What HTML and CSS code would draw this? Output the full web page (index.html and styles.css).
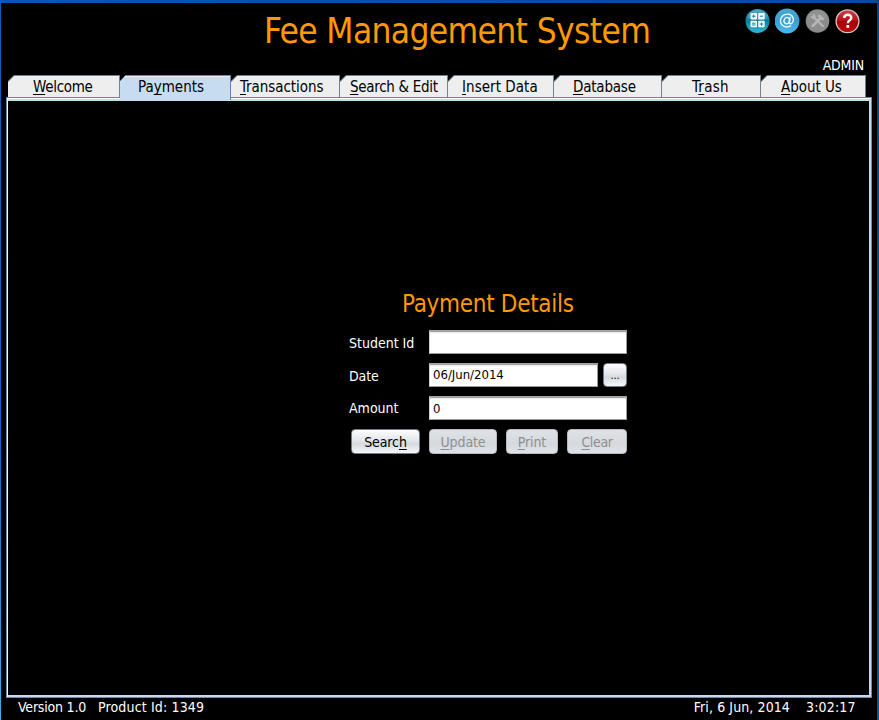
FILE: index.html
```html
<!DOCTYPE html>
<html lang="en">
<head>
<meta charset="utf-8">
<title>Fee Management System</title>
<link rel="stylesheet" href="styles.css">
</head>
<body>
<div class="window">
  <header class="header">
    <h1 class="title">Fee Management System</h1>
    <div class="tools">
      <div class="icons">
        <svg class="icon" viewBox="0 0 26 26" aria-label="Calculator">
          <defs><linearGradient id="teal" x1="0" y1="0" x2="0" y2="1"><stop offset="0" stop-color="#2a9cba"/><stop offset=".5" stop-color="#0c7d9d"/><stop offset="1" stop-color="#35b9d5"/></linearGradient></defs>
          <circle cx="12.500" cy="13" r="12" fill="url(#teal)"/>
          <path d="M2 10a11.3 11.3 0 0 1 22 0Q13 14 2 10Z" fill="#fff" opacity=".15"/>
          <g fill="#f4fbfd"><rect x="5.500" y="5" width="6.500" height="6.500" rx=".8"/><rect x="13.200" y="5" width="6.500" height="6.500" rx=".8"/><rect x="5.500" y="12.800" width="6.500" height="6.500" rx=".8"/><rect x="13.200" y="12.800" width="6.500" height="6.500" rx=".8"/></g>
          <path d="M7 8.200h3.500M8.700 6.500V10M14.700 8.200h3.500M7 15.200h3.500M7 17h3.500M14.700 16h3.500M16.500 14.300v3.500" stroke="#128aab" stroke-width="1"/>
        </svg>
        <svg class="icon" viewBox="0 0 26 26" aria-label="Mail">
          <defs><linearGradient id="sky" x1="0" y1="0" x2="0" y2="1"><stop offset="0" stop-color="#4aa6d0"/><stop offset=".5" stop-color="#3b9fd0"/><stop offset="1" stop-color="#4dbbe9"/></linearGradient></defs>
          <circle cx="12" cy="13" r="12.400" fill="url(#sky)"/>
          <g transform="translate(-.8 .2)" fill="none" stroke="#e9f6fc" stroke-width="1.400" stroke-linecap="round"><ellipse cx="12.600" cy="12.400" rx="2.700" ry="3.200" transform="rotate(18 12.600 12.400)"/><path d="M16 9.200l-.9 4.400c-.5 2.600 2.100 2.500 3.300.6 1.800-3.200.3-8-4.700-8.300C8.800 5.700 6 9.300 6.300 13c.4 5.300 6 7 10.200 4.700"/></g>
        </svg>
        <svg class="icon" viewBox="0 0 26 26" aria-label="Settings">
          <circle cx="12.500" cy="13" r="11.800" fill="#8c8c8c"/>
          <path d="M2 10a11.300 11.300 0 0 1 21 0Q12 14 2 10Z" fill="#fff" opacity=".06"/>
          <g stroke="#b6b6b6" fill="none"><path d="M9 9.500l8.800 8.500" stroke-width="2.200" stroke-linecap="round"/><path d="M6 8.500l2.200 1.300 1.500-1.500L8.400 6.300" stroke-width="1.800"/><path d="M15.800 10L7.700 18" stroke-width="2.500" stroke-linecap="round"/><path d="M13.500 7.300l5 4.500" stroke-width="2.800"/></g>
        </svg>
        <svg class="icon" viewBox="0 0 26 26" aria-label="Help">
          <defs><linearGradient id="red" x1="0" y1="0" x2="0" y2="1"><stop offset="0" stop-color="#cc4146"/><stop offset=".5" stop-color="#b90d12"/><stop offset=".51" stop-color="#a00005"/><stop offset="1" stop-color="#c50a10"/></linearGradient></defs>
          <circle cx="12.500" cy="13.300" r="11.400" fill="url(#red)" stroke="#d8c6c6" stroke-width="1.300"/>
          <path d="M9.200 10C9.300 5.700 16.300 5.700 16.300 9.700c0 2.500-3.500 2.800-3.500 5.500" fill="none" stroke="#fff" stroke-width="2.400"/><rect x="11.400" y="17" width="2.800" height="2.800" fill="#fff"/>
        </svg>
      </div>
      <div class="user">ADMIN</div>
    </div>
  </header>
  <nav class="tabs">
    <a class="tab welcome"><u>W</u>elcome</a>
    <a class="tab payments selected">Pa<u>y</u>ments</a>
    <a class="tab transactions"><u>T</u>ransactions</a>
    <a class="tab search-edit"><u>S</u>earch &amp; Edit</a>
    <a class="tab insert"><u>I</u>nsert Data</a>
    <a class="tab database"><u>D</u>atabase</a>
    <a class="tab trash">T<u>r</u>ash</a>
    <a class="tab about"><u>A</u>bout Us</a>
  </nav>
  <main class="panel">
    <form class="form">
      <h2 class="form-title">Payment Details</h2>
      <div class="row"><label class="id-label">Student Id</label><div class="field"></div></div>
      <div class="row"><label class="date-label">Date</label><div class="field date">06/Jun/2014</div><button type="button" class="btn browse">...</button></div>
      <div class="row"><label>Amount</label><div class="field amount">0</div></div>
      <div class="actions">
        <button type="button" class="btn search">Searc<u>h</u></button>
        <button type="button" class="btn update" disabled><u>U</u>pdate</button>
        <button type="button" class="btn print" disabled><u>P</u>rint</button>
        <button type="button" class="btn clear" disabled><u>C</u>lear</button>
      </div>
    </form>
  </main>
  <footer class="status">
    <span class="version">Version 1.0</span><span class="product">Product Id: 1349</span>
    <span class="day">Fri, 6 Jun, 2014</span><span class="time">3:02:17</span>
  </footer>
</div>
</body>
</html>
```
FILE: styles.css
```css
* { box-sizing: border-box; }
body {
  margin: 0;
  background: #000;
  color: #fff;
  font-family: "DejaVu Sans Condensed", "DejaVu Sans", sans-serif;
  font-size: 14px;
}
h1, h2 { margin: 0; font-weight: 400; color: #ff9900; }
u { text-decoration-thickness: 1px; text-underline-offset: 2px; text-decoration-skip-ink: none; }
.window {
  height: 720px;
  padding: 3px 2px 0 1px;
  overflow: hidden;
  background:
    linear-gradient(#0b5cb5, #0b62c4 60%, #35b5e8) left / 1px 100% no-repeat,
    linear-gradient(#03418a, #0654a8) right / 2px 100% no-repeat,
    linear-gradient(90deg, #0857b3, #074b9d) top / 100% 3px no-repeat,
    #000;
}
.header { display: flex; justify-content: space-between; height: 72px; padding: 0 13px 0 263px; }
.title { font-size: 35px; line-height: 56px; letter-spacing: -.65px; white-space: nowrap; }
.tools { display: flex; flex-direction: column; align-items: flex-end; padding-top: 5px; }
.icons { display: flex; gap: 4px; margin-right: 3px; }
.icon { width: 26px; height: 26px; display: block; }
.user { margin-top: 23px; font-size: 14px; line-height: 16px; letter-spacing: -.2px; }

.tabs {
  display: grid;
  grid-template-columns: 112px 111px 109px 108px 106px 108px 99px 105px;
  align-items: start;
  height: 22px;
  margin-left: 7px;
}
.tab {
  height: 22px;
  border-top: 1px solid #73808d;
  border-right: 1px solid #73808d;
  background: linear-gradient(135deg, #9aa3ac 4.5px, #eee 4.5px);
  clip-path: polygon(6px 0, 100% 0, 100% 100%, 0 100%, 0 6px);
  color: #000;
  font-size: 15px;
  line-height: 22px;
  white-space: nowrap;
}
.selected {
  height: 25px;
  position: relative;
  z-index: 1;
  background: #c8dcf1;
  border-color: #6382bf;
  box-shadow: inset 0 1px #e9f2fb;
}
.welcome { padding-left: 25px; letter-spacing: -.3px; }
.payments { padding-left: 18px; letter-spacing: 0; }
.transactions { padding-left: 9px; letter-spacing: -.05px; }
.search-edit { padding-left: 10px; letter-spacing: -.3px; }
.insert { padding-left: 14px; letter-spacing: .05px; }
.database { padding-left: 19px; letter-spacing: -.2px; }
.trash { padding-left: 30px; letter-spacing: .3px; }
.about { padding-left: 20px; letter-spacing: -.05px; }

.panel {
  width: 866px;
  height: 601px;
  margin-left: 5px;
  border: 1px solid #6f88a8;
  border-top-color: #6382bf;
  border-left-color: #6382bf;
  padding: 190px 0 0 342px;
  background: #000;
  box-shadow: inset 1px 1px #fff, inset 0 3px #c8dcf1, inset -2px -2px #c8d6ee;
}
.form-title { padding-left: 53px; font-size: 24px; line-height: 32px; letter-spacing: -.3px; white-space: nowrap; }
.form { width: 278px; }
.row { display: flex; align-items: center; height: 24px; margin-bottom: 9px; }
.form-title + .row { margin-top: 10px; }
.row label { width: 80px; }
.row .id-label { padding-top: 2px; }
.row .date-label { padding-top: 2px; letter-spacing: -.1px; }
.field {
  flex: 1;
  height: 24px;
  padding-left: 3px;
  border: 1px solid #9a9da0;
  border-top: 2px solid #a2a2a2;
  border-left-color: #ccc;
  background: linear-gradient(#e4e4e4, #fff 2px);
  color: #000;
  font-size: 13px;
  line-height: 20px;
}
.amount { line-height: 21px; }
.btn {
  height: 25px;
  padding: 0;
  border: 1px solid #777b82;
  border-radius: 4px;
  background: linear-gradient(#fdfdfe, #e6e9ed 40%, #d6dae0 60%, #f4f7fb);
  color: #000;
  font: inherit;
  letter-spacing: -.1px;
}
.btn:disabled { background: linear-gradient(#dfe2e6, #d5d9de 60%, #dfe3e8); border-color: #b5b8bd; color: #8e8f91; }
.browse { width: 24px; height: 24px; margin-left: 5px; font-size: 11px; line-height: 24px; }
.actions { display: flex; padding-left: 2px; }
.search { width: 69px; }
.update { width: 68px; margin-left: 9px; }
.print { width: 52px; margin-left: 9px; }
.clear { width: 60px; margin-left: 9px; letter-spacing: -.35px; }

.status { display: flex; height: 22px; padding: 0 21px 0 17px; line-height: 19px; white-space: nowrap; }
.version { width: 80px; letter-spacing: -.2px; }
.product { letter-spacing: .15px; }
.day { margin-left: auto; letter-spacing: .1px; }
.time { width: 50px; margin-left: 16px; letter-spacing: .15px; }
```
